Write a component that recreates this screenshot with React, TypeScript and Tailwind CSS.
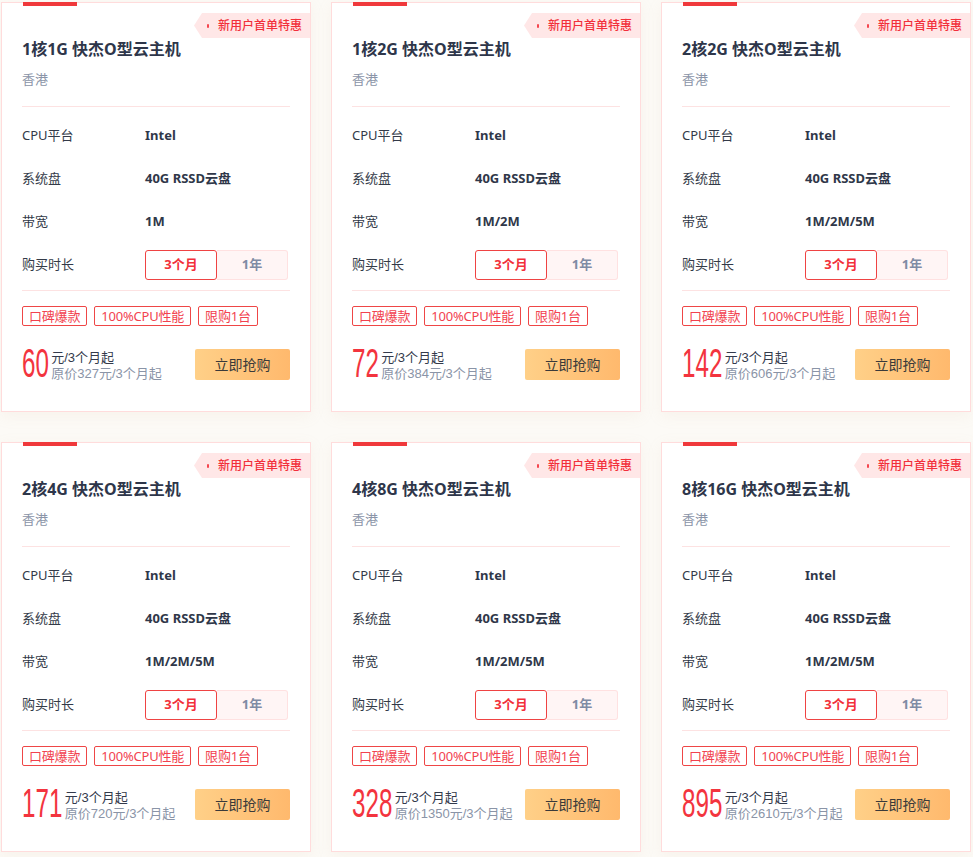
import React from "react";

type Item = { name: string; bw: string; price: string; orig: string };

const items: Item[] = [
  { name: "1核1G 快杰O型云主机", bw: "1M", price: "60", orig: "327" },
  { name: "1核2G 快杰O型云主机", bw: "1M/2M", price: "72", orig: "384" },
  { name: "2核2G 快杰O型云主机", bw: "1M/2M/5M", price: "142", orig: "606" },
  { name: "2核4G 快杰O型云主机", bw: "1M/2M/5M", price: "171", orig: "720" },
  { name: "4核8G 快杰O型云主机", bw: "1M/2M/5M", price: "328", orig: "1350" },
  { name: "8核16G 快杰O型云主机", bw: "1M/2M/5M", price: "895", orig: "2610" },
];

function Row({ label, value }: { label: string; value: string }) {
  return (
    <div className="flex items-center h-[20px] text-[13px] leading-[20px]">
      <div className="w-[123px] text-[#333a48]">{label}</div>
      <div className="font-bold text-[#2f3749]">{value}</div>
    </div>
  );
}

function Card({ item }: { item: Item }) {
  return (
    <div className="relative w-[310px] h-[410px] bg-white border border-[#ffdcdc] shadow-[0_4px_14px_rgba(210,180,150,0.10)] px-[20px]">
      <div className="absolute -top-px left-[21px] w-[54px] h-[4px] bg-[#f0393c]" />
      <div className="absolute top-[10px] right-0 w-[116px] h-[25px] bg-[#ffe7e7] flex items-center [clip-path:polygon(8px_0,100%_0,100%_100%,8px_100%,0_50%)]">
        <span className="ml-[13px] w-[2px] h-[4px] bg-[#f5474f] rounded-[1px]" />
        <span className="ml-[9px] text-[12px] font-medium leading-none text-[#f2303a] whitespace-nowrap">
          新用户首单特惠
        </span>
      </div>

      <div className="pt-[34px] text-[16px] leading-[24px] font-bold text-[#2e364a] whitespace-nowrap">
        {item.name}
      </div>
      <div className="mt-[8px] text-[13px] leading-[20px] text-[#8a94a7]">香港</div>
      <div className="mt-[17px] h-px bg-[#fde2e2]" />

      <div className="mt-[18px] flex flex-col gap-[23px]">
        <Row label="CPU平台" value="Intel" />
        <Row label="系统盘" value="40G RSSD云盘" />
        <Row label="带宽" value={item.bw} />
      </div>

      <div className="mt-[19px] flex items-center h-[30px] text-[13px]">
        <div className="w-[123px] text-[#333a48]">购买时长</div>
        <div className="flex h-[30px] w-[143px]">
          <div className="w-[72px] h-full flex items-center justify-center border border-[#ef4343] rounded-[3px] bg-white text-[#f2303a] font-bold">
            3个月
          </div>
          <div className="flex-1 h-full flex items-center justify-center border border-l-0 border-[#ffe1e1] rounded-r-[3px] bg-[#fff5f5] text-[#7e8ba4] font-bold">
            1年
          </div>
        </div>
      </div>

      <div className="mt-[10px] h-px bg-[#fde2e2]" />

      <div className="mt-[15px] flex gap-[7px] text-[13px]">
        {["口碑爆款", "100%CPU性能", "限购1台"].map((t) => (
          <span
            key={t}
            className="h-[20px] px-[6px] flex items-center border border-[#ef4646] rounded-[2px] text-[#f2424f] leading-none whitespace-nowrap tracking-[-0.2px]"
          >
            {t}
          </span>
        ))}
      </div>

      <div className="mt-[22px] flex items-center justify-between">
        <div className="flex items-end">
          <span
            className="relative inline-block h-[32px] overflow-visible"
            style={{ width: item.price.length * 13.6 }}
          >
            <span className="absolute left-0 -top-[5px] origin-left scale-x-[0.59] text-[41px] leading-[41px] text-[#f3343e] whitespace-nowrap [font-family:'Liberation_Sans',sans-serif]">
              {item.price}
            </span>
          </span>
          <div className="ml-[2px] flex flex-col text-[13px] leading-[16px] -mb-[2px] [font-family:'Liberation_Sans','Noto_Sans_CJK_SC',sans-serif]">
            <span className="text-[#333a4c]">元/3个月起</span>
            <span className="text-[#8a94a7]">原价{item.orig}元/3个月起</span>
          </div>
        </div>
        <button className="w-[95px] h-[31px] rounded-[2px] bg-gradient-to-r from-[#ffd088] to-[#ffb96d] text-[14px] text-[#3a3a3a]">
          立即抢购
        </button>
      </div>
    </div>
  );
}

export default function App() {
  return (
    <div className="min-h-[857px] w-full bg-[#fcfaf6] [font-family:'Noto_Sans','Noto_Sans_CJK_SC',sans-serif] overflow-hidden">
      <div className="pt-[2px] pl-px grid grid-cols-[310px_310px_310px] gap-x-[20px] gap-y-[30px]">
        {items.map((it) => (
          <Card key={it.name} item={it} />
        ))}
      </div>
    </div>
  );
}
